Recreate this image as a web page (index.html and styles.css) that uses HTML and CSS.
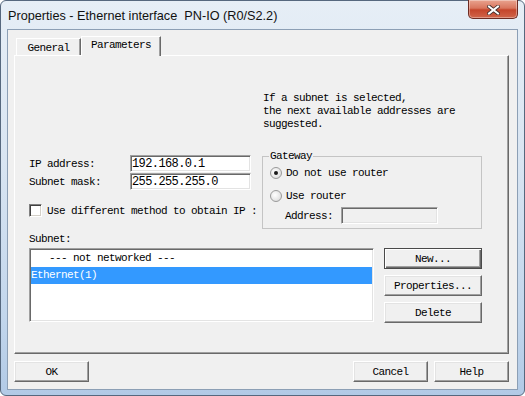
FILE: index.html
```html
<!DOCTYPE html>
<html lang="en">
<head>
  <meta charset="UTF-8" />
  <title>Properties - Ethernet interface PN-IO (R0/S2.2)</title>
  <link rel="stylesheet" href="styles.css">
</head>
<body>
  <div class="window">
    <div class="titlebar">
      <span class="title">Properties - Ethernet interface&nbsp; PN-IO (R0/S2.2)</span>
      <button class="close" title="Close">
        <svg width="13" height="10" viewBox="0 0 13 10">
          <path d="M2 1.5 L11 8.5 M11 1.5 L2 8.5" stroke="#3b2a28" stroke-width="3.6" stroke-linecap="square" fill="none"/>
          <path d="M2 1.5 L11 8.5 M11 1.5 L2 8.5" stroke="#fff" stroke-width="2" stroke-linecap="square" fill="none"/>
        </svg>
      </button>
    </div>

    <div class="client">
      <div class="tabs">
        <div class="tab">General</div>
        <div class="tab active">Parameters</div>
      </div>

      <div class="panel">
        <div class="info">
          If a subnet is selected,<br>
          the next available addresses are<br>
          suggested.
        </div>

        <div class="addr-row">
          <div class="left-col">
            <div class="fields">
              <label>IP address:</label>
              <div class="edit">192.168.0.1</div>
              <label>Subnet mask:</label>
              <div class="edit">255.255.255.0</div>
            </div>
            <div class="check-row">
              <span class="checkbox"></span>
              <span>Use different method to obtain IP :</span>
            </div>
          </div>

          <fieldset class="group">
            <legend>Gateway</legend>
            <div class="radio-row first">
              <span class="radio checked"></span>
              <span>Do not use router</span>
            </div>
            <div class="radio-row">
              <span class="radio"></span>
              <span>Use router</span>
            </div>
            <div class="gw-addr">
              <span class="gw-label">Address:</span>
              <div class="edit disabled"></div>
            </div>
          </fieldset>
        </div>

        <div class="subnet-label">Subnet:</div>
        <div class="subnet-row">
          <div class="listbox">
            <div class="item">   --- not networked ---</div>
            <div class="item selected">Ethernet(1)</div>
          </div>
          <div class="side-buttons">
            <button class="btn default">New...</button>
            <button class="btn">Properties...</button>
            <button class="btn">Delete</button>
          </div>
        </div>
      </div>

      <div class="footer">
        <button class="btn wide">OK</button>
        <div class="footer-right">
          <button class="btn wide">Cancel</button>
          <button class="btn wide">Help</button>
        </div>
      </div>
    </div>
  </div>
</body>
</html>
```

FILE: styles.css
```css
:root {
  --face: #f0f0f0;
  --shadow: #a0a0a0;
  --dark: #696969;
  --select: #3399ff;
  --ui-font: "Liberation Mono", "DejaVu Sans Mono", monospace;
}
* { box-sizing: border-box; margin: 0; padding: 0; }
body {
  background: #fff;
  width: 525px;
  height: 396px;
  overflow: hidden;
}
.window {
  width: 525px;
  height: 396px;
  display: flex;
  flex-direction: column;
  border: 1px solid #56687e;
  border-radius: 6px;
  background: linear-gradient(to bottom, #e6eef6 0%, #d9e5f2 40%, #c2d6ec 80%, #b2cae6 100%);
}
.titlebar {
  height: 28px;
  flex: none;
  display: flex;
  justify-content: space-between;
  align-items: flex-start;
  padding-left: 7px;
}
.title {
  font-family: "Liberation Sans", Arial, sans-serif;
  font-size: 12.7px;
  line-height: 16px;
  margin-top: 7px;
  color: #111;
}
.close {
  width: 50px;
  height: 19px;
  margin-top: -1px;
  margin-right: 6px;
  border: 1px solid #6d2b22;
  border-top: none;
  border-radius: 0 0 5px 5px;
  background: linear-gradient(to bottom, #e9a38f 0%, #d9765e 45%, #c5452b 55%, #d0654a 100%);
  box-shadow: inset 0 0 0 1px rgba(255,255,255,0.35);
  display: flex;
  align-items: center;
  justify-content: center;
  padding-top: 1px;
}
.client {
  flex: 1;
  margin: 0 6px 5px 6px;
  border: 1px solid #8c9fb5;
  background: var(--face);
  padding: 6px 8px 7px 6px;
  display: flex;
  flex-direction: column;
  font-family: var(--ui-font);
  font-size: 11px;
  letter-spacing: -0.6px;
  color: #000;
}

/* tabs */
.tabs {
  display: flex;
  align-items: flex-end;
  height: 20px;
  flex: none;
  margin-bottom: -1px;
  padding-left: 2px;
}
.tab {
  height: 18px;
  width: 65px;
  line-height: 18px;
  text-align: center;
  border: 1px solid #fff;
  border-bottom: none;
  border-right-color: var(--dark);
  box-shadow: inset -1px 0 var(--shadow);
  background: var(--face);
}
.tab.active {
  height: 20px;
  width: 80px;
  line-height: 17px;
  position: relative;
  z-index: 1;
  border-right: 1px solid var(--dark);
}

/* panel */
.panel {
  height: 299px;
  flex: none;
  border: 1px solid #fff;
  border-right-color: var(--dark);
  border-bottom-color: var(--dark);
  box-shadow: inset -1px -1px var(--shadow);
  padding: 0 0 0 14px;
}
.info {
  margin: 36px 0 0 234px;
  line-height: 13px;
  white-space: nowrap;
}
.addr-row {
  display: flex;
  align-items: flex-start;
  margin-top: 19px;
}
.left-col {
  width: 233px;
  padding-top: 5px;
}
.fields {
  display: grid;
  grid-template-columns: 101px 121px;
  grid-auto-rows: 17px;
  row-gap: 1px;
  align-items: center;
}
.fields label { padding-top: 1px; }
.edit {
  height: 17px;
  width: 121px;
  background: #fff;
  border: 1px solid;
  border-color: var(--shadow) #fff #fff var(--shadow);
  box-shadow: inset 1px 1px var(--dark), inset -1px -1px #e3e3e3;
  padding: 0 2px 0 1px;
  line-height: 16px;
  font-size: 12px;
  letter-spacing: -0.6px;
  white-space: nowrap;
}
.edit.disabled {
  width: 97px;
  background: var(--face);
}
.check-row {
  margin-top: 14px;
  display: flex;
  align-items: center;
  gap: 5px;
  height: 13px;
  white-space: nowrap;
}
.checkbox {
  width: 13px;
  height: 13px;
  flex: none;
  background: #fff;
  border: 1px solid;
  border-color: #808080 #fff #fff #808080;
  box-shadow: inset 1px 1px #404040, inset -1px -1px #d4d0c8;
}

/* gateway group */
.group {
  width: 220px;
  border: 1px solid #c4c4c4;
  padding: 0 6px 4px 6px;
  min-width: 0;
}
.group legend {
  padding: 0 1px;
  line-height: 13px;
}
.radio-row {
  display: flex;
  align-items: center;
  gap: 4px;
  height: 13px;
  margin: 10px 0 0 1px;
}
.radio-row.first { margin-top: 3px; }
.radio {
  width: 12px;
  height: 12px;
  border-radius: 50%;
  border: 1px solid #9a9a9a;
  background: radial-gradient(circle at 40% 40%, #fff 0%, #e6e6e6 60%, #cfcfcf 100%);
  display: flex;
  align-items: center;
  justify-content: center;
}
.radio.checked::after {
  content: "";
  width: 4px;
  height: 4px;
  border-radius: 50%;
  background: #1a1a1a;
}
.gw-addr {
  display: flex;
  align-items: center;
  margin: 5px 0 0 16px;
}
.gw-label { width: 56px; }

/* subnet list */
.subnet-label {
  margin-top: 4px;
  line-height: 13px;
}
.subnet-row {
  display: flex;
  gap: 10px;
  margin-top: 2px;
}
.listbox {
  width: 345px;
  height: 74px;
  background: #fff;
  border: 1px solid;
  border-color: var(--shadow) #fff #fff var(--shadow);
  box-shadow: inset 1px 1px var(--dark), inset -1px -1px #e3e3e3;
  padding: 1px;
}
.item {
  height: 17px;
  line-height: 17px;
  white-space: pre;
}
.item.selected {
  background: var(--select);
  color: #fff;
}
.side-buttons {
  display: flex;
  flex-direction: column;
  gap: 6px;
}

/* buttons */
.btn {
  width: 98px;
  height: 21px;
  font-family: var(--ui-font);
  font-size: 11px;
  letter-spacing: -0.6px;
  color: #000;
  background: var(--face);
  border: 1px solid;
  border-color: #fff var(--dark) var(--dark) #fff;
  box-shadow: inset -1px -1px var(--shadow), inset 1px 1px #e3e3e3;
  cursor: pointer;
}
.btn.default {
  border-color: #4a4a4a;
  box-shadow: inset 1px 1px #fff, inset -1px -1px var(--dark), inset -2px -2px var(--shadow);
}
.btn.wide {
  width: 75px;
}
.footer {
  margin-top: 7px;
  display: flex;
  justify-content: space-between;
}
.footer-right {
  display: flex;
  gap: 6px;
}
```
